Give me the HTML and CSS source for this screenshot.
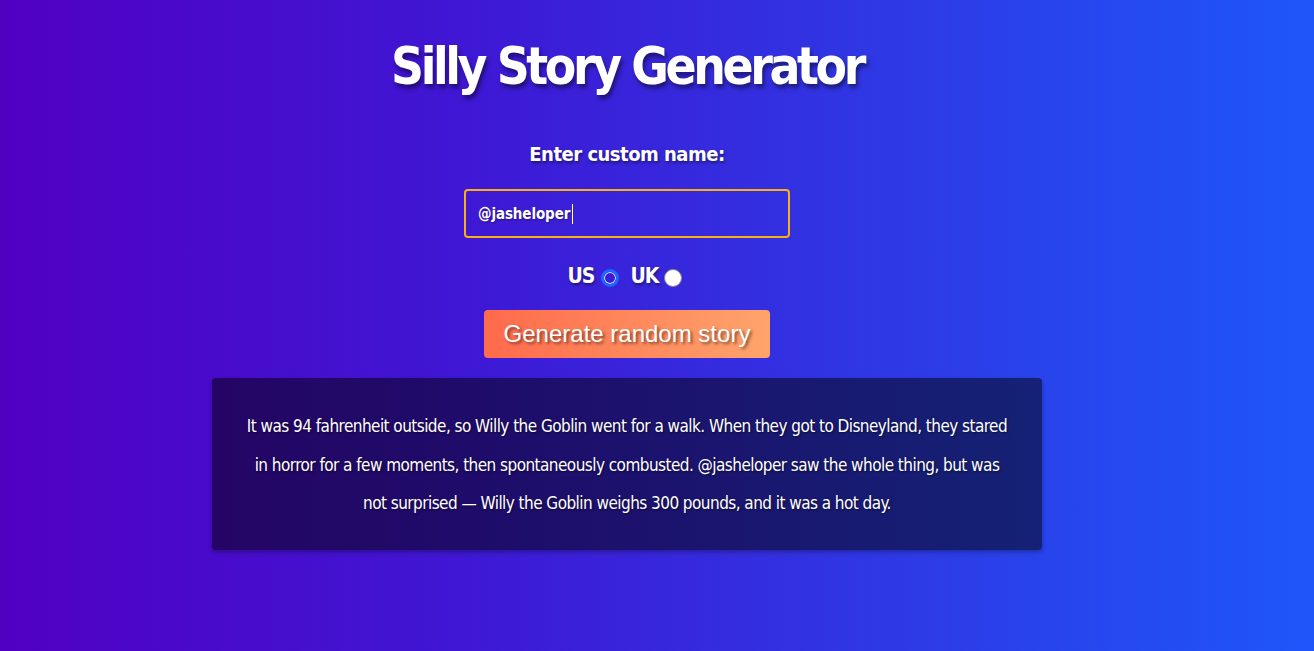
FILE: index.html
```html
<!DOCTYPE html>
<html>
<head>
<meta charset="utf-8">
<title>Silly Story Generator</title>
<link rel="stylesheet" href="styles.css">
</head>
<body>
<main class="page">
  <h1 class="title">Silly Story Generator</h1>
  <div class="field">
    <label class="label" for="customname">Enter custom name:</label>
    <div class="input"><span class="input-text">@jasheloper</span><span class="caret"></span></div>
  </div>
  <div class="units">
    <span class="unit">US</span><span class="radio radio-on"></span>
    <span class="unit">UK</span><span class="radio"></span>
  </div>
  <div class="btn-row"><button class="btn">Generate random story</button></div>
  <div class="story">
    <p>It was 94 fahrenheit outside, so Willy the Goblin went for a walk. When they got to Disneyland, they stared in horror for a few moments, then spontaneously combusted. @jasheloper saw the whole thing, but was not surprised — Willy the Goblin weighs 300 pounds, and it was a hot day.</p>
  </div>
</main>
</body>
</html>
```
FILE: styles.css
```css
html, body { height: 100%; }
body {
  margin: 0;
  background: linear-gradient(90deg, #5100c2 0%, #3f17d4 35%, #2d3be6 70%, #1e56fa 100%);
  color: #fff;
  font-family: "DejaVu Sans Condensed", "DejaVu Sans", sans-serif;
}
.page {
  width: 830px;
  margin-left: 212px;
  display: flex;
  flex-direction: column;
  align-items: center;
}
.title {
  margin: 35px 0 0;
  font-size: 51px;
  font-weight: bold;
  letter-spacing: -3.4px;
  line-height: 64px;
  text-shadow: 2px 4px 4px rgba(0,0,0,0.45);
}
.field {
  margin-top: 42px;
  display: flex;
  flex-direction: column;
  align-items: center;
}
.label {
  font-size: 20px;
  font-weight: bold;
  letter-spacing: -0.5px;
  line-height: 26px;
  text-shadow: 1px 2px 3px rgba(0,0,0,0.45);
}
.input {
  margin-top: 22px;
  width: 322px;
  height: 45px;
  border: 2px solid #f7b017;
  border-radius: 4px;
  box-sizing: content-box;
  display: flex;
  align-items: center;
}
.input-text {
  margin-left: 12px;
  font-size: 15px;
  font-weight: bold;
  letter-spacing: -0.1px;
  text-shadow: 1px 1px 2px rgba(0,0,0,0.4);
}
.caret {
  width: 1px;
  height: 20px;
  background: #fff;
  margin-left: 2px;
}
.units {
  margin-top: 26px;
  margin-right: 4px;
  display: flex;
  align-items: center;
  height: 24px;
}
.unit {
  font-size: 21px;
  font-weight: bold;
  letter-spacing: -1px;
  text-shadow: 1px 2px 3px rgba(0,0,0,0.45);
}
.radio {
  width: 16px;
  height: 16px;
  border-radius: 50%;
  background: #fff;
  border: 1px solid #8a8a8a;
  margin: 3px 11px 0 7px;
  box-sizing: content-box;
}
.radio:last-child { margin-right: 0; margin-left: 6px; }
.radio-on {
  border: 3px solid #1b66ff;
  width: 12px;
  height: 12px;
  background: #3a1cd8;
  box-shadow: 0 0 0 1px #e8ecff inset;
}
.btn-row { margin-top: 22px; }
.btn {
  width: 286px;
  height: 48px;
  border: none;
  border-radius: 4px;
  background: linear-gradient(90deg, #ff6a4c, #ffa46b);
  color: #fff;
  font-family: "Liberation Sans", Arial, sans-serif;
  font-size: 24px;
  text-shadow: 2px 2px 3px rgba(0,0,0,0.5);
  padding: 0;
}
.story {
  margin-top: 20px;
  width: 830px;
  box-sizing: border-box;
  background: rgba(0,0,0,0.5);
  border-radius: 4px;
  box-shadow: 0 2px 4px rgba(0,0,0,0.3);
  padding: 29px 30px 27px;
}
.story p {
  margin: 0;
  text-align: center;
  font-size: 17px;
  letter-spacing: -0.55px;
  line-height: 38.5px;
  text-shadow: 1px 1px 2px rgba(0,0,0,0.5);
}
```
